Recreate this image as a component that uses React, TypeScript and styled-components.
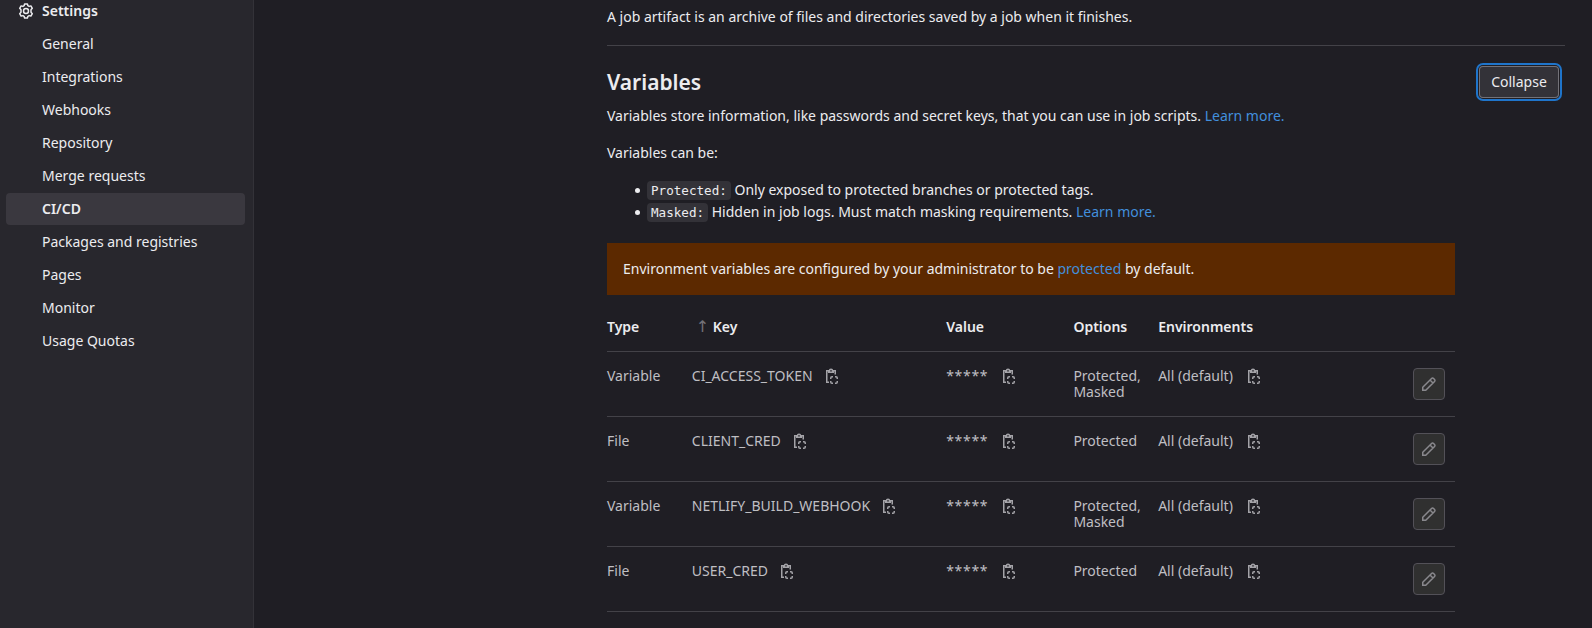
import React from 'react';
import styled, { createGlobalStyle } from 'styled-components';

const sans = `'Noto Sans', 'Liberation Sans', sans-serif`;
const mono = `'DejaVu Sans Mono', 'Liberation Mono', monospace`;

const GlobalStyle = createGlobalStyle`
  *, *::before, *::after { box-sizing: border-box; }
  html, body { margin: 0; background: #1f1e24; }
  body {
    font-family: ${sans};
    font-size: 14px;
    line-height: 20px;
    color: #ececef;
    overflow: hidden;
  }
`;

const Page = styled.div`
  display: flex;
  height: 628px;
  overflow: hidden;
`;

const Sidebar = styled.nav`
  flex: none;
  display: flex;
  flex-direction: column;
  gap: 1px;
  width: 254px;
  padding: 0 8px 0 6px;
  background: #28272d;
  border-right: 1px solid #333238;
`;

const SectionTitle = styled.div`
  display: flex;
  align-items: center;
  gap: 8px;
  height: 32px;
  margin-top: -5px;
  padding-left: 12px;
  font-weight: 600;
`;

const NavItem = styled.a<{ $active?: boolean }>`
  display: flex;
  align-items: center;
  height: 32px;
  padding-left: 36px;
  border-radius: 4px;
  font-weight: ${(p) => (p.$active ? 600 : 400)};
  background: ${(p) => (p.$active ? '#3a383f' : 'transparent')};
`;

const Content = styled.main`
  flex: 1;
  padding-right: 27px;
  padding-left: 353px;
`;

const Artifacts = styled.section`
  height: 46px;
  padding-top: 7px;
  border-bottom: 1px solid #434248;
`;

const Text = styled.p`
  margin: 0;
`;

const Variables = styled.section`
  padding-top: 20px;
`;

const Heading = styled.header`
  display: flex;
  justify-content: space-between;
  align-items: flex-start;
  height: 40px;
  padding-right: 6px;
`;

const Title = styled.h4`
  margin: 0;
  padding-top: 2px;
  font-size: 21px;
  line-height: 28px;
  font-weight: 600;
`;

const CollapseButton = styled.button`
  width: 80px;
  height: 32px;
  padding: 0;
  border: 0;
  border-radius: 4px;
  background: #333238;
  color: #ececef;
  font: 400 14px/16px ${sans};
  box-shadow: inset 0 0 0 1px #737278, 0 0 0 1px #1f1e24, 0 0 0 3px #1f75cb;
`;

const Link = styled.a`
  color: #428fdc;
`;

const Intro = styled.div`
  display: flex;
  flex-direction: column;
  gap: 17px;
`;

const List = styled.ul`
  margin: 16px 0 20px;
  padding-left: 28px;
  list-style: none;
`;

const ListItem = styled.li`
  height: 22px;
  line-height: 22px;

  &::before {
    content: '';
    display: inline-block;
    width: 5px;
    height: 5px;
    margin-right: 7px;
    border-radius: 50%;
    background: currentColor;
    vertical-align: 2px;
  }
`;

const Code = styled.code`
  padding: 2px 4px;
  border-radius: 4px;
  background: #333238;
  font-family: ${mono};
  font-size: 12.6px;
`;

const Warning = styled.div`
  width: 848px;
  height: 52px;
  padding: 16px;
  background: #5c2900;
`;

const Table = styled.div`
  width: 848px;
  padding-top: 1px;
`;

const Row = styled.div<{ $head?: boolean }>`
  display: grid;
  grid-template-columns: 10% 30% 15% 10% 20% 15%;
  height: ${(p) => (p.$head ? '56px' : '65px')};
  padding-top: ${(p) => (p.$head ? '23px' : '16px')};
  border-bottom: 1px solid #434248;
  line-height: 16px;
  color: ${(p) => (p.$head ? '#ececef' : '#bfbfc3')};
  font-weight: ${(p) => (p.$head ? 600 : 400)};
`;

const Cell = styled.div<{ $gap?: number }>`
  display: flex;
  align-items: flex-start;
  gap: ${(p) => p.$gap ?? 0}px;
`;

const SortArrow = styled.span`
  width: 21px;
  padding-left: 4px;
  color: #737278;
  font-family: 'DejaVu Sans', sans-serif;
  font-size: 16px;
  font-weight: 400;
`;

const Stars = styled.span`
  letter-spacing: 0.7px;
`;

const Actions = styled.div`
  display: flex;
  justify-content: flex-end;
  padding-right: 10px;
`;

const EditButton = styled.button`
  display: flex;
  align-items: center;
  justify-content: center;
  width: 32px;
  height: 32px;
  padding: 0;
  border: 1px solid #535158;
  border-radius: 4px;
  background: #303030;
  color: #89888d;
`;

const Icon = styled.svg`
  flex: none;
  display: block;
  width: 16px;
  height: 16px;
  fill: none;
  stroke: currentColor;
  stroke-width: 1.5;
`;

const CopyGlyph = styled(Icon)`
  color: #a4a3a8;
`;

const GearIcon = () => (
  <Icon viewBox="0 0 16 16">
    <path
      strokeLinejoin="round"
      d="M6.6 .9h2.8l.5 1.8 1.2.7 1.8-.5 1.4 2.4-1.3 1.4v2.6l1.3 1.4-1.4 2.4-1.8-.5-1.2.7-.5 1.8H6.6l-.5-1.8-1.2-.7-1.8.5-1.4-2.4L3 9.3V6.7L1.7 5.3l1.4-2.4 1.8.5 1.2-.7z"
    />
    <circle cx="8" cy="8" r="2.5" />
  </Icon>
);

const CopyIcon = () => (
  <CopyGlyph viewBox="0 0 16 16">
    <path d="M5 2.75H2.75v11.5H5M9.5 2.75h1.75V6.5" />
    <path d="M4.75 4.25V2.75h.75a1.5 1.5 0 0 1 3 0h.75v1.5z" />
    <path d="M6.75 11v-1A1.25 1.25 0 0 1 8 8.75h1M11 8.75h1A1.25 1.25 0 0 1 13.25 10v1M13.25 13v1A1.25 1.25 0 0 1 12 15.25h-1M9 15.25H8A1.25 1.25 0 0 1 6.75 14v-1" />
  </CopyGlyph>
);

const PencilIcon = () => (
  <Icon viewBox="0 0 16 16">
    <path d="M1.75 14.25v-3l8.8-8.8a1.4 1.4 0 0 1 2 0l1 1a1.4 1.4 0 0 1 0 2l-8.8 8.8zM9 4l3 3" />
  </Icon>
);

const NAV = [
  'General',
  'Integrations',
  'Webhooks',
  'Repository',
  'Merge requests',
  'CI/CD',
  'Packages and registries',
  'Pages',
  'Monitor',
  'Usage Quotas',
];

const VARIABLES = [
  { type: 'Variable', key: 'CI_ACCESS_TOKEN', options: ['Protected', 'Masked'] },
  { type: 'File', key: 'CLIENT_CRED', options: ['Protected'] },
  { type: 'Variable', key: 'NETLIFY_BUILD_WEBHOOK', options: ['Protected', 'Masked'] },
  { type: 'File', key: 'USER_CRED', options: ['Protected'] },
];

export default function App() {
  return (
    <Page>
      <GlobalStyle />
      <Sidebar>
        <SectionTitle>
          <GearIcon />
          Settings
        </SectionTitle>
        {NAV.map((name) => (
          <NavItem key={name} $active={name === 'CI/CD'}>
            {name}
          </NavItem>
        ))}
      </Sidebar>
      <Content>
        <Artifacts>
          <Text>A job artifact is an archive of files and directories saved by a job when it finishes.</Text>
        </Artifacts>
        <Variables>
          <Heading>
            <Title>Variables</Title>
            <CollapseButton>Collapse</CollapseButton>
          </Heading>
          <Intro>
            <Text>
              Variables store information, like passwords and secret keys, that you can use in job scripts.{' '}
              <Link>Learn more.</Link>
            </Text>
            <Text>Variables can be:</Text>
          </Intro>
          <List>
            <ListItem>
              <Code>Protected:</Code> Only exposed to protected branches or protected tags.
            </ListItem>
            <ListItem>
              <Code>Masked:</Code> Hidden in job logs. Must match masking requirements. <Link>Learn more.</Link>
            </ListItem>
          </List>
          <Warning>
            Environment variables are configured by your administrator to be <Link>protected</Link> by default.
          </Warning>
          <Table>
            <Row $head>
              <Cell>Type</Cell>
              <Cell>
                <SortArrow>↑</SortArrow>Key
              </Cell>
              <Cell>Value</Cell>
              <Cell>Options</Cell>
              <Cell>Environments</Cell>
            </Row>
            {VARIABLES.map((v) => (
              <Row key={v.key}>
                <Cell>{v.type}</Cell>
                <Cell $gap={11}>
                  {v.key}
                  <CopyIcon />
                </Cell>
                <Cell $gap={12.5}>
                  <Stars>*****</Stars>
                  <CopyIcon />
                </Cell>
                <Cell>{v.options.join(', ')}</Cell>
                <Cell $gap={13}>
                  All (default)
                  <CopyIcon />
                </Cell>
                <Actions>
                  <EditButton aria-label="Edit">
                    <PencilIcon />
                  </EditButton>
                </Actions>
              </Row>
            ))}
          </Table>
        </Variables>
      </Content>
    </Page>
  );
}
